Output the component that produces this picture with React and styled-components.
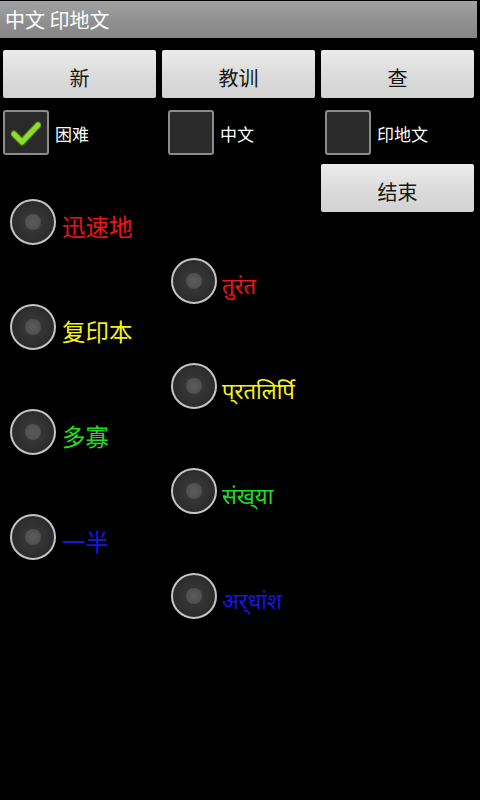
import React from "react";
import styled, { createGlobalStyle } from "styled-components";

const Global = createGlobalStyle`
  html, body { margin: 0; padding: 0; background: #000; }
  body { font-family: "Noto Sans CJK SC", "Noto Sans", sans-serif; }
  #root { min-height: 800px; background: #000; }
`;

const Screen = styled.div`
  width: 480px;
  height: 800px;
  background: #000;
  overflow: hidden;
  padding-top: 1px;
  box-sizing: border-box;
`;

const TitleBar = styled.div`
  width: 477px;
  height: 37px;
  background: linear-gradient(#a2a2a2, #8e8e8e 60%, #868686);
  color: #fff;
  font-size: 20px;
  line-height: 37px;
  padding-left: 5px;
  box-sizing: border-box;
  font-family: "Noto Sans CJK SC", sans-serif;
`;

const ButtonRow = styled.div`
  display: grid;
  grid-template-columns: repeat(3, 153px);
  column-gap: 6px;
  padding: 0 6px 0 3px;
  margin-top: 12px;
`;

const Button = styled.div`
  height: 48px;
  border-radius: 2px;
  background: linear-gradient(#ececec, #dcdcdc 50%, #d2d2d2);
  color: #151515;
  font-size: 20px;
  display: flex;
  align-items: center;
  justify-content: center;
  padding-top: 6px;
  box-sizing: border-box;
  font-family: "Noto Sans CJK SC", sans-serif;
`;

const CheckRow = styled.div`
  display: grid;
  grid-template-columns: 165px 157px 1fr;
  margin-top: 12px;
  height: 45px;
`;

const CheckItem = styled.div`
  display: flex;
  align-items: center;
  gap: 6px;
  padding-left: ${(p) => p.$pad}px;
`;

const Box = styled.div`
  width: 46px;
  height: 45px;
  box-sizing: border-box;
  border: 2px solid #8c8c8c;
  border-radius: 3px;
  background: #2a2a2a;
  display: flex;
  align-items: center;
  justify-content: center;
`;

const CheckLabel = styled.span`
  color: #fff;
  font-size: 17px;
  padding-top: 2px;
  font-family: "Noto Sans CJK SC", sans-serif;
`;

const Lower = styled.div`
  display: flex;
  margin-top: 9px;
`;

const RadioList = styled.div`
  flex: 1;
  display: flex;
  flex-direction: column;
  padding-top: 35px;
`;

const RadioItem = styled.div`
  display: flex;
  align-items: center;
  height: 46px;
  margin-left: ${(p) => (p.$right ? 171 : 10)}px;
  margin-top: ${(p) => (p.$right ? 13 : 0)}px;
  gap: ${(p) => (p.$right ? 5 : 6)}px;
`;

const RadioCircle = styled.div`
  width: 46px;
  height: 46px;
  box-sizing: border-box;
  border-radius: 50%;
  border: 2px solid #c4c4c4;
  background: radial-gradient(circle, #3c3c3c 0%, #2e2e2e 60%, #232323 100%);
  display: flex;
  align-items: center;
  justify-content: center;
  flex-shrink: 0;
`;

const RadioDot = styled.div`
  width: 16px;
  height: 16px;
  border-radius: 50%;
  background: radial-gradient(circle, #5c5c5c, #4a4a4a);
`;

const RadioText = styled.span`
  color: ${(p) => p.$color};
  font-size: ${(p) => (p.$right ? 22 : 23.5)}px;
  padding-top: 8px;
  font-family: "Noto Sans CJK SC", "Noto Sans Devanagari", sans-serif;
  white-space: nowrap;
`;

const EndButton = styled(Button)`
  width: 153px;
  margin-right: 6px;
  flex-shrink: 0;
`;

const Check = () => (
  <svg width="30" height="26" viewBox="0 0 30 26">
    <path
      d="M3 14 L11 22 L27 5"
      fill="none"
      stroke="#4a7a12"
      strokeWidth="7"
      strokeLinecap="round"
      strokeLinejoin="round"
    />
    <path
      d="M3 14 L11 22 L27 5"
      fill="none"
      stroke="#8fdc2c"
      strokeWidth="5"
      strokeLinecap="round"
      strokeLinejoin="round"
    />
  </svg>
);

const items = [
  { t: "迅速地", c: "#f21414" },
  { t: "तुरंत", c: "#f21414", r: true },
  { t: "复印本", c: "#f4f410" },
  { t: "प्‌रतलिर्पि", c: "#f4f410", r: true },
  { t: "多寡", c: "#1ee01e" },
  { t: "संख्‌या", c: "#1ee01e", r: true },
  { t: "一半", c: "#1616e6" },
  { t: "अर्‌धांश", c: "#1616e6", r: true },
];

export default function App() {
  return (
    <Screen>
      <Global />
      <TitleBar>中文 印地文</TitleBar>
      <ButtonRow>
        <Button>新</Button>
        <Button>教训</Button>
        <Button>查</Button>
      </ButtonRow>
      <CheckRow>
        <CheckItem $pad={3}>
          <Box>
            <Check />
          </Box>
          <CheckLabel>困难</CheckLabel>
        </CheckItem>
        <CheckItem $pad={3}>
          <Box />
          <CheckLabel>中文</CheckLabel>
        </CheckItem>
        <CheckItem $pad={3}>
          <Box />
          <CheckLabel>印地文</CheckLabel>
        </CheckItem>
      </CheckRow>
      <Lower>
        <RadioList>
          {items.map((it, i) => (
            <RadioItem key={i} $right={it.r}>
              <RadioCircle>
                <RadioDot />
              </RadioCircle>
              <RadioText $color={it.c} $right={it.r}>
                {it.t}
              </RadioText>
            </RadioItem>
          ))}
        </RadioList>
        <EndButton>结束</EndButton>
      </Lower>
    </Screen>
  );
}
